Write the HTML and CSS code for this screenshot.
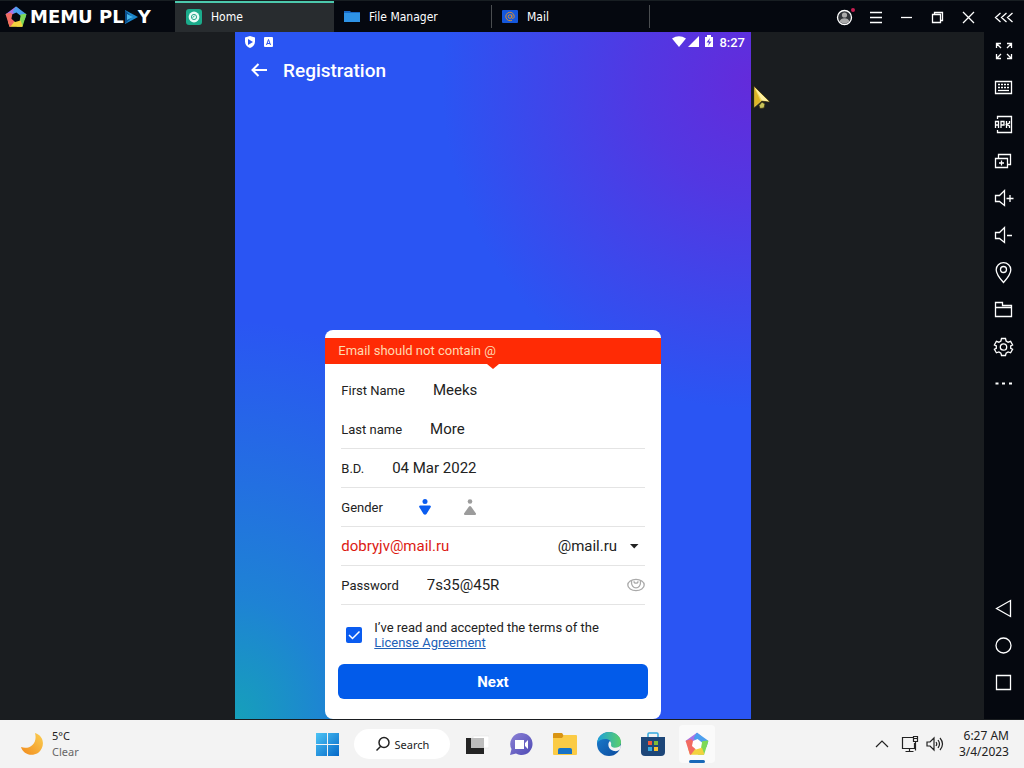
FILE: index.html
```html
<!DOCTYPE html>
<html lang="en">
<head>
<meta charset="utf-8">
<meta name="viewport" content="width=device-width, initial-scale=1">
<title>MEmu Play - Registration</title>
<link rel="stylesheet" href="styles.css">
</head>
<body>
<svg class="defs" aria-hidden="true">
  <defs>
    <linearGradient id="moonFill" x1="1" y1="0" x2="0" y2="1"><stop offset="0" stop-color="#fbcf52"/><stop offset="1" stop-color="#f18a1c"/></linearGradient>
    <linearGradient id="winFill" x1="0" y1="0" x2="1" y2="1"><stop offset="0" stop-color="#4cc4f5"/><stop offset="1" stop-color="#0568c8"/></linearGradient>
    <linearGradient id="chatFill" x1="0" y1="0" x2="1" y2="1"><stop offset="0" stop-color="#8d82d6"/><stop offset="1" stop-color="#4d49b4"/></linearGradient>
    <linearGradient id="edgeTop" x1="0" y1="0" x2="1" y2="0"><stop offset="0" stop-color="#1c9fdc"/><stop offset="1" stop-color="#5bd06a"/></linearGradient>
    <linearGradient id="edgeLow" x1="0" y1="0" x2="1" y2="1"><stop offset="0" stop-color="#1a7fd0"/><stop offset="1" stop-color="#0c4a9c"/></linearGradient>
    <symbol id="pentagon" viewBox="0 0 24 24">
      <g stroke-width="1.500" stroke-linejoin="round">
        <path fill="#a873e6" stroke="#a873e6" d="M12 1.500L1.500 9.200l7 1L15 4z"/>
        <path fill="#4c9fee" stroke="#4c9fee" d="M12 1.500l10.500 7.700-1.500 5-5.500-3-6-5z"/>
        <path fill="#7ed957" stroke="#7ed957" d="M22.500 9.200l-4 12.800h-5l1-6 3-6z"/>
        <path fill="#f3d23f" stroke="#f3d23f" d="M18.500 22h-13L4 17l6-2.500 6.500 2z"/>
        <path fill="#f26b62" stroke="#f26b62" d="M5.500 22l-4-12.800L6 8l3 3 1 5z"/>
      </g>
      <path class="core" d="M12.500 7l4.500 3.500-1 5.500-5 1.500L7 14l1-5z"/>
    </symbol>
  </defs>
</svg>

<header class="topbar">
  <div class="brand">
    <svg class="brand-mark" viewBox="0 0 24 24" aria-hidden="true"><use href="#pentagon"/></svg>
    <span class="brand-name">MEMU PL<svg class="brand-play" viewBox="0 0 14 14" role="img" aria-label="A"><path fill="#1b86cc" d="M1 0l13 7-13 7z"/><path fill="#0b4f8d" d="M1 0l7 7-7 7z"/><path fill="#46b5ea" d="M3 4l6 3-6 3z"/></svg>Y</span>
  </div>
  <nav class="tabs">
    <button class="tab tab-active" type="button">
      <svg viewBox="0 0 16 16" aria-hidden="true"><rect width="16" height="16" rx="3" fill="#1bab8b"/><circle cx="8" cy="8" r="5.400" fill="#e8fbf6"/><circle cx="8" cy="8" r="2.600" fill="none" stroke="#2aa98c"/><path stroke="#2aa98c" d="M6.500 8.500l2-1.500"/></svg>
      <span>Home</span>
    </button>
    <button class="tab" type="button">
      <svg viewBox="0 0 16 16" aria-hidden="true"><path fill="#1769c4" d="M0 2h6l1 1h9v3H0z"/><path fill="#2e93e6" d="M0 4h16v9H0z"/></svg>
      <span>File Manager</span>
    </button>
    <button class="tab" type="button">
      <svg viewBox="0 0 16 16" aria-hidden="true"><rect y="1" width="16" height="13" rx="1" fill="#1457dc"/><g fill="none" stroke="#d99335"><circle cx="8" cy="7.500" r="1.800"/><path d="M9.800 5.500v3c0 1.500 2.400 1.200 2.400-1A4.200 4.200 0 1 0 10 11.200"/></g></svg>
      <span>Mail</span>
    </button>
  </nav>
  <div class="window-tools">
    <button type="button" aria-label="Account"><svg viewBox="0 0 20 20"><circle cx="9.500" cy="10.500" r="7" fill="#303338" stroke="#fff" stroke-width="1.300"/><circle cx="9.500" cy="8" r="2.600" fill="#aaa"/><path class="solid" fill="#aaa" d="M4.500 14.500c1-4.500 9-4.500 10 0q-5 4-10 0z"/><circle cx="18" cy="3" r="2" fill="#c81e52"/></svg></button>
    <button type="button" aria-label="Menu"><svg viewBox="0 0 20 20"><path d="M4 5.500h12M4 10.500h12M4 15.500h12"/></svg></button>
    <button type="button" aria-label="Minimize"><svg viewBox="0 0 20 20"><path d="M4 10.500h11"/></svg></button>
    <button type="button" aria-label="Restore"><svg viewBox="0 0 20 20"><path d="M4.500 7.500h8v8h-8zM6.500 7.500v-2h8v8h-2"/></svg></button>
    <button type="button" aria-label="Close"><svg viewBox="0 0 20 20"><path d="M4 5l11 11M15 5L4 16"/></svg></button>
    <button class="collapse" type="button" aria-label="Collapse sidebar"><svg viewBox="0 0 20 20"><path d="M6.500 6l-5 4.500 5 4.500M12.500 6l-5 4.500 5 4.500M18.500 6l-5 4.500 5 4.500"/></svg></button>
  </div>
</header>

<main class="emulator">
  <div class="stage">
    <section class="phone">
      <div class="status">
        <svg viewBox="0 0 14 14" aria-hidden="true"><path fill="#fff" d="M7 1l5 1.500v4c0 3-2 5.500-5 6.500-3-1-5-3.500-5-6.500v-4z"/><path fill="#2c55f0" d="M5 4l5 3-5 3z"/></svg>
        <svg viewBox="0 0 14 14" aria-hidden="true"><rect x="2" y="2" width="9" height="10" rx="1" fill="#fff"/><path fill="none" stroke="#2c55f0" d="M4.500 10l2-5.500 2 5.500M5 8.500h3"/></svg>
        <span class="status-gap"></span>
        <svg viewBox="0 0 14 14" aria-hidden="true"><path fill="#fff" d="M0 3.500q7-4.500 14 0L7 12z"/></svg>
        <svg viewBox="0 0 14 14" aria-hidden="true"><path fill="#fff" d="M12 1v11H1z"/></svg>
        <svg viewBox="0 0 14 14" aria-hidden="true"><path fill="#fff" d="M5 0h4v2h2v10H3V2h2z"/><path fill="#5636d8" d="M8 3L4.500 7.500H7L6 11l3.500-4.500H7z"/></svg>
        <time>8:27</time>
      </div>
      <div class="appbar">
        <button type="button" aria-label="Back"><svg viewBox="0 0 18 18"><path fill="none" stroke="#fff" stroke-width="2" d="M17 8H2M8.500 2l-6 6 6 6"/></svg></button>
        <h1>Registration</h1>
      </div>

      <form class="card">
        <p class="alert" role="alert">Email should not contain @</p>
        <div class="row row-plain">
          <label for="first">First Name</label>
          <input id="first" type="text" value="Meeks">
        </div>
        <div class="row">
          <label for="last">Last name</label>
          <input id="last" type="text" value="More">
        </div>
        <div class="row">
          <label for="birth">B.D.</label>
          <input id="birth" type="text" value="04 Mar 2022">
        </div>
        <div class="row" role="radiogroup" aria-labelledby="gender">
          <span id="gender">Gender</span>
          <div class="genders">
            <label class="gender"><input type="radio" name="gender" aria-label="Male" checked><svg viewBox="0 0 12 16"><circle cx="6" cy="2.500" r="2.500"/><path d="M1 6.500h10q1.500.5.500 2L7.500 15q-1.500 1.500-3 0L.5 8.500q-1-1.500.5-2z"/></svg></label>
            <label class="gender"><input type="radio" name="gender" aria-label="Female"><svg viewBox="0 0 12 16"><circle cx="6" cy="2.500" r="2.300"/><path d="M5 7.500q1-1 2 0l5 7q.3 1.300-1 1.500H1q-1.300-.2-1-1.500z"/></svg></label>
          </div>
        </div>
        <div class="row">
          <input class="invalid" type="text" value="dobryjv@mail.ru" aria-label="Email" aria-invalid="true">
          <div class="domain">
            <select aria-label="Mail domain"><option>@mail.ru</option></select>
            <svg viewBox="0 0 10 6" aria-hidden="true"><path fill="#222" d="M1 1h8.500L5.200 5.500z"/></svg>
          </div>
        </div>
        <div class="row">
          <label for="pass">Password</label>
          <input id="pass" type="text" value="7s35@45R">
          <button class="eye" type="button" aria-label="Hide password"><svg viewBox="0 0 18 14"><g fill="none" stroke="#aaa" stroke-width="1.300"><ellipse cx="9" cy="7" rx="8.200" ry="5.600"/><path d="M4.500 2.800c-1 9.500 10 9.500 9 0"/><path d="M7 3.200c0 2.600 4 2.600 4 0"/></g></svg></button>
        </div>
        <div class="terms">
          <input id="terms" type="checkbox" checked>
          <svg class="tick" viewBox="0 0 16 16" aria-hidden="true"><path fill="none" stroke="#fff" stroke-width="1.500" d="M3 8l3.500 3.500L13.500 4.500"/></svg>
          <p><label for="terms">I’ve read and accepted the terms of the</label> <a href="#license">License Agreement</a></p>
        </div>
        <button class="next" type="button">Next</button>
      </form>

      <svg class="pointer" viewBox="0 0 20 28" aria-hidden="true"><path fill="#f0d55a" stroke="#3c3412" stroke-width=".8" d="M3 2l16 16-8-1-8 7z"/><path fill="#dcb526" d="M3.500 4l6 13-6 5.500z"/><path fill="#fff0a0" d="M4 4l14 13.500-7-1z"/><path fill="#c9c45a" stroke="#3c3412" stroke-width=".8" d="M11 18l3 2-1 4-4 .5-1-3z"/></svg>
    </section>
  </div>

  <aside class="sidebar">
    <button type="button" aria-label="Full screen"><svg viewBox="0 0 20 20"><path d="M2.500 7V2.500H7M2.500 2.500L7 7M13 2.500h4.500V7M17.500 2.500L13 7M2.500 13v4.500H7M2.500 17.500L7 13M13 17.500h4.500V13M17.500 17.500L13 13"/></svg></button>
    <button type="button" aria-label="Keyboard"><svg viewBox="0 0 20 20"><path d="M1.500 3.500h16v12h-16z"/><path stroke-dasharray="2 1" d="M4 6.500h11M4 9.500h11"/><path d="M4 12.500h11"/></svg></button>
    <button type="button" aria-label="Install APK"><svg viewBox="0 0 20 20"><path d="M3.500 4V1.500h14v16h-14V15"/><path d="M1.500 13V6.500h3V13M1.500 10h3M7 13V6.500h3V10H7M12.500 6v7M15.500 6v2l-3 1.500 3 1.500v2"/></svg></button>
    <button type="button" aria-label="Multi instance"><svg viewBox="0 0 20 20"><path d="M1.500 6.500h12v9h-12zM4.500 6.500v-4h12v10h-3M7.500 8.500v5M5 11h5"/></svg></button>
    <button type="button" aria-label="Volume up"><svg viewBox="0 0 20 20"><path d="M1.500 6.500h4l5-5v15l-5-4h-4zM12.500 9.500h7M16 6v7"/></svg></button>
    <button type="button" aria-label="Volume down"><svg viewBox="0 0 20 20"><path d="M1.500 6.500h4l5-5v15l-5-4h-4zM13 9.500h5"/></svg></button>
    <button type="button" aria-label="Location"><svg viewBox="0 0 20 20"><path d="M9.500 19.500C4.500 14 2.200 10.500 2.200 6.700a7.300 7 0 0 1 14.600 0c0 3.800-2.300 7.300-7.300 12.800z"/><circle cx="9.500" cy="6.500" r="3"/></svg></button>
    <button type="button" aria-label="Shared folder"><svg viewBox="0 0 20 20"><path d="M1.500 16.500v-14h7v3h9v11zM1.500 7.500h16"/></svg></button>
    <button type="button" aria-label="Settings"><svg viewBox="0 0 20 20"><path d="M7.500 1.500h4l.6 2.500 2 1.200 2.500-.8 2 3.500-1.900 1v2.400l1.900 1-2 3.500-2.500-.8-2 1.200-.6 2.300h-4L6.900 16.200l-2-1.200-2.500.8-2-3.500 1.900-1V8.900l-1.900-1 2-3.500 2.500.8 2-1.200z"/><circle cx="9.500" cy="10" r="3.200"/></svg></button>
    <button type="button" aria-label="More"><svg viewBox="0 0 20 20"><path stroke-width="2" d="M1.500 9.500h3M8 9.500h3M15 9.500h3"/></svg></button>
    <span class="sidebar-gap"></span>
    <button type="button" aria-label="Back"><svg viewBox="0 0 20 20"><path d="M2.500 9.500L16.500 1.500v16z"/></svg></button>
    <button type="button" aria-label="Home"><svg viewBox="0 0 20 20"><circle cx="9.500" cy="9.500" r="7.500"/></svg></button>
    <button type="button" aria-label="Recent apps"><svg viewBox="0 0 20 20"><path d="M2.500 2.500h14v14h-14z"/></svg></button>
  </aside>
</main>

<footer class="taskbar">
  <button class="weather" type="button">
    <svg viewBox="0 0 24 24" aria-hidden="true"><path fill="url(#moonFill)" d="M15 1c10 3 10 15 3 20C11 25 3 22 1 15c8 3 17-3 14-14z"/></svg>
    <span class="weather-text">5°C<small>Clear</small></span>
  </button>
  <div class="apps">
    <button class="app" type="button" aria-label="Start"><svg viewBox="0 0 24 24"><path fill="url(#winFill)" d="M1 1h11v11H1zM13 1h11v11H13zM1 13h11v11H1zM13 13h11v11H13z"/></svg></button>
    <button class="search" type="button"><svg viewBox="0 0 16 16" aria-hidden="true"><path fill="none" stroke="#222" stroke-width="1.500" d="M14 6.500a5 5 0 1 1-10 0 5 5 0 0 1 10 0zM5.500 10.500L1.500 14.500"/></svg>Search</button>
    <button class="app" type="button" aria-label="Task view"><svg viewBox="0 0 24 24"><path fill="#fff" stroke="#ddd" stroke-width=".5" d="M8 4h16v12H8z"/><path fill="#242424" d="M1 6h18v16H1z"/><path fill="#bdbdbd" d="M6 6h13v10H6z"/></svg></button>
    <button class="app" type="button" aria-label="Chat"><svg viewBox="0 0 24 24"><path fill="url(#chatFill)" d="M13 1a11 11 0 1 1-6 20.500L1 23l1.500-6A11 11 0 0 1 13 1z"/><path fill="#fff" d="M6 8h9v9H6zM16 11l3-3v9l-3-3z"/></svg></button>
    <button class="app" type="button" aria-label="File Explorer"><svg viewBox="0 0 24 24"><path fill="#d99413" d="M0 2q0-1 1-1h8l2 3v4H0z"/><path fill="#fbcb45" d="M0 6h9l2-3h12q1 0 1 1v18q0 1-1 1H1q-1 0-1-1z"/><path fill="#1773c6" d="M5 22v-4q0-2 2-2h10q2 0 2 2v4z"/></svg></button>
    <button class="app" type="button" aria-label="Edge"><svg viewBox="0 0 24 24"><circle cx="12" cy="12" r="12" fill="url(#edgeLow)"/><path fill="url(#edgeTop)" d="M0 11C1 4 6 0 12 0c7 0 12 5 12 10 0 4-3 6-6 6-4 0-5-2-4-4 1-6-10-7-14-1z"/><path fill="#f3f3f3" d="M13 9c-3 2-2 9 4 10 3 .5 5-.5 6.500-2l.5-4c-2 3-10 4-10 0 .5-1 0-3-1-4z"/></svg></button>
    <button class="app" type="button" aria-label="Microsoft Store"><svg viewBox="0 0 24 24"><path fill="none" stroke="#35a9df" stroke-width="1.500" d="M7 6V2q0-1 1-1h8q1 0 1 1v4"/><path fill="#1d4678" d="M0 5h24v15q0 4-4 4H4q-4 0-4-4z"/><path fill="#f0573a" d="M7 9h4v4H7z"/><path fill="#7fba35" d="M13 9h4v4h-4z"/><path fill="#35a9df" d="M7 15h4v4H7z"/><path fill="#f8c22f" d="M13 15h4v4h-4z"/></svg></button>
    <button class="app app-open" type="button" aria-label="MEmu"><svg viewBox="0 0 24 24"><use href="#pentagon"/></svg></button>
  </div>
  <div class="tray">
    <button type="button" aria-label="Hidden icons"><svg viewBox="0 0 18 18"><path d="M3 12l6-6 6 6"/></svg></button>
    <button type="button" aria-label="Network"><svg viewBox="0 0 18 18"><path d="M12 2.500H1.500v11h12V8M4.500 16.500h8M8.500 13.500v3M12.500 1.500h4v5h-4zM14.500 7v8.500M12.500 3.500h4"/></svg></button>
    <button type="button" aria-label="Volume"><svg viewBox="0 0 18 18"><path d="M1 7h3l4-4v12l-4-4H1zM10 7q1.500 2 0 4M12 5q3 4 0 8M14 3q5 6 0 12"/></svg></button>
    <div class="clock"><time>6:27 AM</time><time>3/4/2023</time></div>
  </div>
</footer>
</body>
</html>
```
FILE: styles.css
```css
* { box-sizing: border-box; }

body {
  margin: 0;
  min-height: 100vh;
  display: flex;
  flex-direction: column;
  background: #1a1d20;
  font-family: Roboto, "Noto Sans", sans-serif;
  font-size: 13px;
  color: #222;
}

button, input, select { font: inherit; color: inherit; }
button { margin: 0; padding: 0; border: 0; background: none; }
svg { display: block; flex: none; }
.defs { position: absolute; width: 0; height: 0; }

/* Emulator title bar */
.topbar {
  display: flex;
  height: 32px;
  background: #05080f;
  border-top: 1px solid #181e22;
  color: #fff;
}
.brand { width: 175px; padding-left: 5px; display: flex; align-items: center; gap: 3px; }
.brand-mark { width: 22px; height: 22px; color: #05080f; }
.core { fill: currentColor; }
.brand-name {
  display: flex;
  align-items: center;
  font: bold 18px/20px "DejaVu Sans", sans-serif;
  white-space: pre;
}
.brand-play { width: 14px; height: 14px; }

.tabs { display: flex; flex: 1; }
.tab {
  width: 158px;
  margin: 4px 0;
  padding-left: 10px;
  display: flex;
  align-items: center;
  gap: 9px;
  border-right: 1px solid #4a4d50;
  font: 12px/16px "DejaVu Sans Condensed", "DejaVu Sans", sans-serif;
}
.tab svg { width: 16px; height: 16px; }
.tab-active {
  width: 159px;
  margin: 0;
  padding-bottom: 2px;
  padding-left: 11px;
  background: #282c2f;
  border-right: 0;
  border-top: 2px solid #4cc9ad;
}

.window-tools { display: flex; }
.window-tools button { width: 31px; display: grid; place-items: center; }
.window-tools .collapse { width: 40px; }
.window-tools svg, .sidebar svg {
  width: 20px;
  height: 20px;
  fill: none;
  stroke: #fff;
  stroke-width: 1.3;
  overflow: visible;
}
.window-tools circle, .window-tools .solid { stroke: none; }
.window-tools circle:first-child { stroke: #fff; }

/* Stage and phone */
.emulator { flex: 1; display: flex; }
.stage { flex: 1; padding-left: 2px; display: flex; justify-content: center; }
.phone {
  position: relative;
  aspect-ratio: 516 / 687;
  display: flex;
  flex-direction: column;
  color: #fff;
  background:
    radial-gradient(ellipse 60% 48% at 100% 7%, #632bdb 0%, rgba(99, 43, 219, .7) 35%, rgba(99, 43, 219, 0) 100%),
    radial-gradient(ellipse 62% 58% at 0% 100%, #16a0ba 0%, rgba(26, 146, 202, .75) 30%, rgba(42, 85, 243, 0) 100%),
    #2a55f3;
}
.status { height: 20px; padding: 0 6px 0 8px; display: flex; align-items: center; font-weight: 500; }
.status svg { width: 14px; height: 14px; margin-right: 1px; }
.status svg:nth-child(2) { margin-left: 4px; }
.status-gap { flex: 1; }
.status time { margin-left: 2px; }
.appbar { height: 38px; padding-left: 15px; display: flex; align-items: center; gap: 15px; }
.appbar svg { width: 18px; height: 18px; }
.appbar h1 { margin: 0; font-size: 19px; font-weight: 500; line-height: 24px; }

.pointer { position: absolute; left: 100%; top: 52px; width: 20px; height: 28px; }

/* Registration form */
.card {
  width: 65%;
  margin: auto auto 0;
  padding: 8px 0 20px;
  border-radius: 8px;
  background: #fff;
  color: #222;
}
.alert {
  position: relative;
  margin: 0 0 7px;
  padding: 0 13px;
  line-height: 26px;
  background: #ff2b05;
  color: #ffd9b0;
}
.alert::after {
  content: "";
  position: absolute;
  top: 100%;
  left: 50%;
  margin-left: -6px;
  border: 6px solid transparent;
  border-top: 5px solid #ff2b05;
  border-bottom: 0;
}
.row {
  height: 39px;
  margin: 0 16px;
  display: flex;
  align-items: center;
  gap: 28px;
  border-bottom: 1px solid #e4e4e4;
}
.row-plain { border-color: transparent; }
.row input[type="text"] {
  flex: 1;
  min-width: 0;
  padding: 0;
  border: 0;
  outline: 0;
  background: none;
  font-size: 15px;
}
.row .invalid { color: #dc1a12; }
.genders { display: flex; gap: 33px; padding-left: 8px; }
.gender { display: grid; }
.gender > * { grid-area: 1 / 1; width: 12px; height: 16px; }
.gender input { appearance: none; margin: 0; }
.gender svg { fill: #9c9c9c; pointer-events: none; }
.gender input:checked + svg { fill: #0a5cf0; }

.domain { display: grid; align-items: center; }
.domain > * { grid-area: 1 / 1; }
.domain select {
  appearance: none;
  padding: 0 27px 0 0;
  border: 0;
  background: none;
  font-size: 15px;
}
.domain svg { justify-self: end; width: 10px; height: 6px; margin-right: 6px; pointer-events: none; }
.eye svg { width: 18px; height: 14px; }

.terms {
  margin: 15px 16px 14px 21px;
  display: grid;
  grid-template-columns: 16px 1fr;
  column-gap: 12px;
  align-items: center;
}
.terms input, .tick { grid-area: 1 / 1; width: 16px; height: 16px; margin: 0; }
.terms input { appearance: none; border-radius: 2px; background: #b0b0b0; }
.terms input:checked { background: #0a5cf0; }
.tick { pointer-events: none; }
.terms p { margin: 0; line-height: 15px; }
.terms a { display: block; color: #2160b8; }
.next {
  display: block;
  width: calc(100% - 26px);
  height: 35px;
  margin: 0 13px;
  border-radius: 6px;
  background: #025bea;
  color: #fff;
  font-size: 15px;
  font-weight: 700;
}

/* Sidebar */
.sidebar {
  width: 40px;
  padding-bottom: 18px;
  display: flex;
  flex-direction: column;
  background: #05080f;
}
.sidebar button { height: 37px; display: grid; place-items: center; }
.sidebar-gap { flex: 1; }

/* Desktop taskbar */
.taskbar {
  height: 49px;
  display: grid;
  grid-template-columns: 1fr auto 1fr;
  align-items: stretch;
  background: #f3f3f3;
  border-top: 1px solid #1a1d20;
  font-family: "Noto Sans", sans-serif;
  font-size: 11px;
}
.weather { justify-self: start; padding-left: 20px; display: flex; align-items: center; gap: 8px; text-align: left; }
.weather svg { width: 24px; height: 24px; }
.weather-text { line-height: 16px; }
.weather small { display: block; font-size: 11px; color: #666; }
.apps { display: flex; align-items: center; }
.app { position: relative; width: 44px; height: 48px; display: grid; place-items: center; color: #fff; }
.app svg { width: 24px; height: 24px; }
.app-open::before {
  content: "";
  position: absolute;
  inset: 5px 4px;
  border-radius: 4px;
  background: #fafafa;
}
.app-open svg { position: relative; }
.app-open::after {
  content: "";
  position: absolute;
  left: 14px;
  bottom: 5px;
  width: 16px;
  height: 3px;
  border-radius: 2px;
  background: #1769b8;
}
.search {
  width: 96px;
  height: 30px;
  margin: 0 5px;
  display: flex;
  align-items: center;
  justify-content: center;
  gap: 4px;
  border-radius: 15px;
  background: #fff;
}
.search svg { width: 16px; height: 16px; }
.tray { justify-self: end; padding-right: 15px; display: flex; align-items: center; gap: 7px; }
.tray button:first-child { margin-right: 3px; }
.tray svg { width: 18px; height: 18px; fill: none; stroke: #222; stroke-width: 1.2; }
.clock { display: grid; margin-left: 8px; font-size: 12px; line-height: 16px; text-align: right; }
```
